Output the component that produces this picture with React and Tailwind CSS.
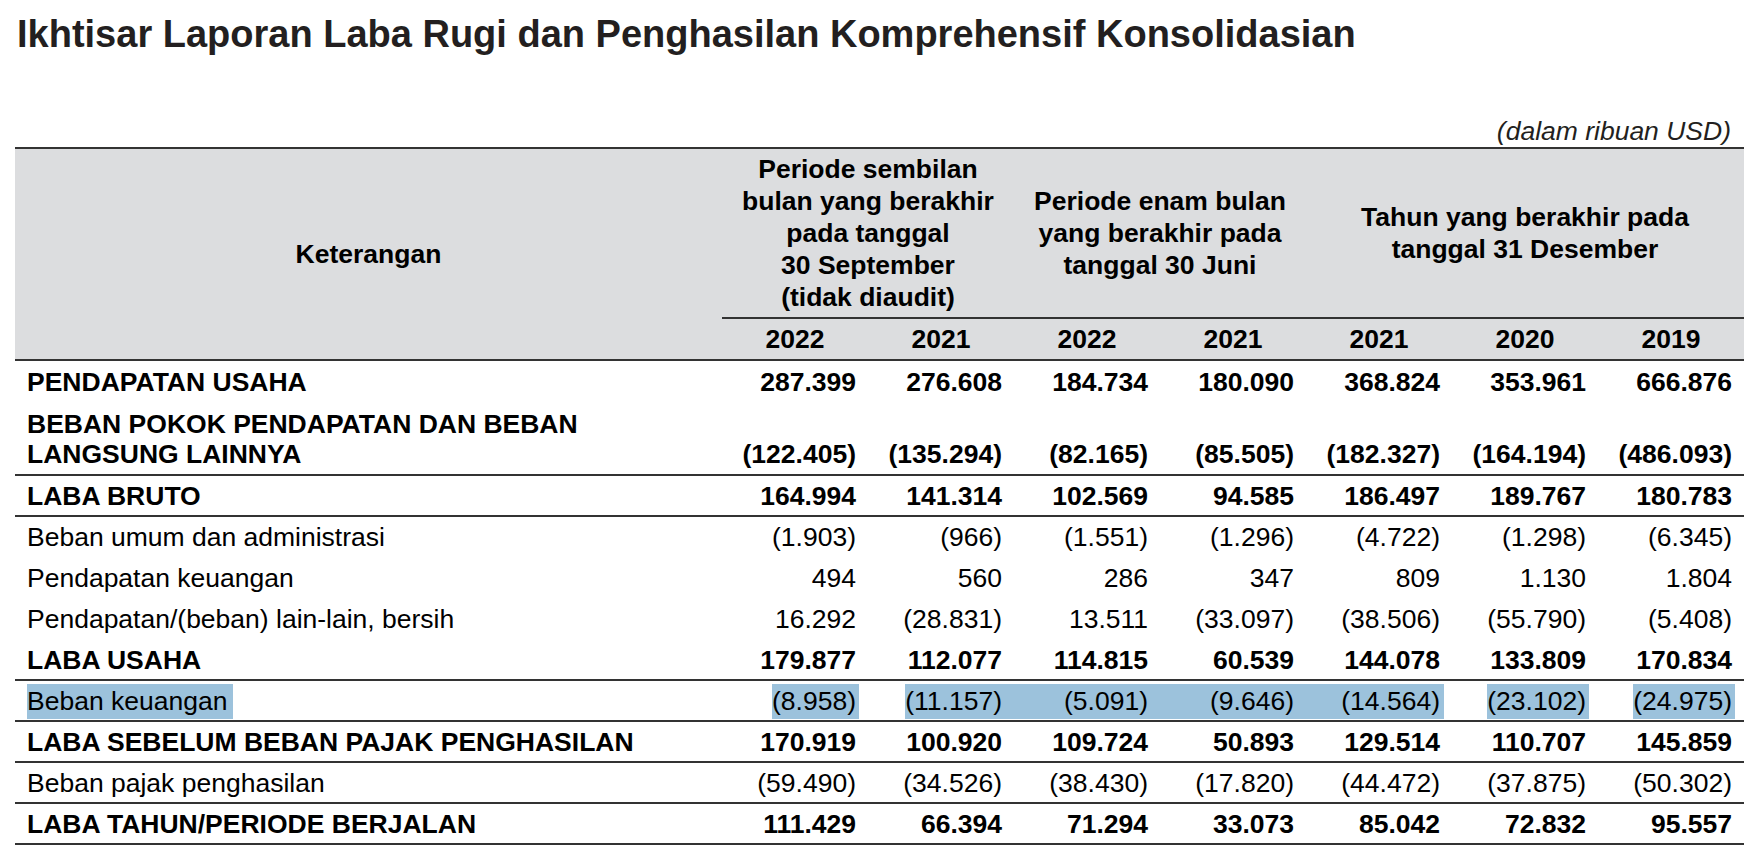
import React from "react";

const rows = [
  { label: ["PENDAPATAN USAHA"], bold: true, border: false, pad: "pt-[6px] pb-[7px]", v: ["287.399", "276.608", "184.734", "180.090", "368.824", "353.961", "666.876"] },
  { label: ["BEBAN POKOK PENDAPATAN DAN BEBAN", "LANGSUNG LAINNYA"], bold: true, border: true, pad: "pt-[5px] pb-[5px]", v: ["(122.405)", "(135.294)", "(82.165)", "(85.505)", "(182.327)", "(164.194)", "(486.093)"] },
  { label: ["LABA BRUTO"], bold: true, border: true, pad: "pt-[5px] pb-[4px]", v: ["164.994", "141.314", "102.569", "94.585", "186.497", "189.767", "180.783"] },
  { label: ["Beban umum dan administrasi"], bold: false, border: false, pad: "pt-[5px] pb-[6px]", v: ["(1.903)", "(966)", "(1.551)", "(1.296)", "(4.722)", "(1.298)", "(6.345)"] },
  { label: ["Pendapatan keuangan"], bold: false, border: false, pad: "pt-[5px] pb-[6px]", v: ["494", "560", "286", "347", "809", "1.130", "1.804"] },
  { label: ["Pendapatan/(beban) lain-lain, bersih"], bold: false, border: false, pad: "pt-[5px] pb-[6px]", v: ["16.292", "(28.831)", "13.511", "(33.097)", "(38.506)", "(55.790)", "(5.408)"] },
  { label: ["LABA USAHA"], bold: true, border: true, pad: "pt-[5px] pb-[4px]", v: ["179.877", "112.077", "114.815", "60.539", "144.078", "133.809", "170.834"] },
  { highlight: true },
  { label: ["LABA SEBELUM BEBAN PAJAK PENGHASILAN"], bold: true, border: true, pad: "pt-[5px] pb-[4px]", v: ["170.919", "100.920", "109.724", "50.893", "129.514", "110.707", "145.859"] },
  { label: ["Beban pajak penghasilan"], bold: false, border: true, pad: "pt-[5px] pb-[4px]", v: ["(59.490)", "(34.526)", "(38.430)", "(17.820)", "(44.472)", "(37.875)", "(50.302)"] },
  { label: ["LABA TAHUN/PERIODE BERJALAN"], bold: true, border: true, pad: "pt-[5px] pb-[4px]", v: ["111.429", "66.394", "71.294", "33.073", "85.042", "72.832", "95.557"] },
];

const cols = "grid grid-cols-[707px_repeat(7,146px)]";
const hl = "bg-[#9cc2dc]";

function HighlightRow() {
  return (
    <div className={`${cols} items-end pt-[3px] pb-[1px] border-b-2 border-[#333] leading-[35px]`}>
      <div className="pl-[12px]">
        <span className={`inline-block ${hl} pr-[6px]`}>Beban keuangan</span>
      </div>
      <div className="text-right pr-[9px]">
        <span className={`inline-block ${hl} pr-[3px]`}>(8.958)</span>
      </div>
      <div className="text-right pr-0">
        <span className={`inline-block ${hl} pr-[12px]`}>(11.157)</span>
      </div>
      <div className={`text-right pr-[12px] ${hl}`}>(5.091)</div>
      <div className={`text-right pr-[12px] ${hl}`}>(9.646)</div>
      <div className="pr-[8px]">
        <div className={`text-right pr-[4px] ${hl}`}>(14.564)</div>
      </div>
      <div className="text-right pr-[9px]">
        <span className={`inline-block ${hl} pr-[3px]`}>(23.102)</span>
      </div>
      <div className="text-right pr-[9px]">
        <span className={`inline-block ${hl} pr-[3px]`}>(24.975)</span>
      </div>
    </div>
  );
}

export default function App() {
  return (
    <div className="w-[1756px] h-[862px] bg-white text-black font-['Liberation_Sans',Arial,sans-serif] overflow-hidden">
      <h1 className="pl-[17px] pt-[12px] text-[38px] leading-[44px] font-bold text-[#231f20]">
        Ikhtisar Laporan Laba Rugi dan Penghasilan Komprehensif Konsolidasian
      </h1>
      <div className="ml-[15px] w-[1729px] mt-[60px] text-right pr-[13px] italic text-[26.5px] leading-[30px] text-[#231f20]">
        (dalam ribuan USD)
      </div>
      <div className="ml-[15px] w-[1729px] mt-[1px] text-[26.5px] leading-[30px]">
        <div className={`${cols} border-t-2 border-b-2 border-[#333] bg-[#dcdddf] font-bold`}>
          <div className="row-span-2 flex items-center justify-center">Keterangan</div>
          <div className="col-span-2 h-[168px] flex items-center justify-center text-center leading-[32px]">
            <div>
              Periode sembilan
              <br />
              bulan yang berakhir
              <br />
              pada tanggal
              <br />
              30 September
              <br />
              (tidak diaudit)
            </div>
          </div>
          <div className="col-span-2 h-[168px] flex items-center justify-center text-center leading-[32px]">
            <div>
              Periode enam bulan
              <br />
              yang berakhir pada
              <br />
              tanggal 30 Juni
            </div>
          </div>
          <div className="col-span-3 h-[168px] flex items-center justify-center text-center leading-[32px]">
            <div>
              Tahun yang berakhir pada
              <br />
              tanggal 31 Desember
            </div>
          </div>
          {["2022", "2021", "2022", "2021", "2021", "2020", "2019"].map((y, i) => (
            <div key={i} className="border-t-2 border-[#333] h-[42px] flex items-center justify-center">
              {y}
            </div>
          ))}
        </div>
        {rows.map((r, i) =>
          r.highlight ? (
            <HighlightRow key={i} />
          ) : (
            <div
              key={i}
              className={`${cols} items-end ${r.pad} ${r.border ? "border-b-2 border-[#333]" : ""} ${r.bold ? "font-bold" : ""}`}
            >
              <div className="pl-[12px]">
                {r.label.map((l, j) => (
                  <div key={j}>{l}</div>
                ))}
              </div>
              {r.v.map((n, j) => (
                <div key={j} className="text-right pr-[12px]">
                  {n}
                </div>
              ))}
            </div>
          )
        )}
      </div>
    </div>
  );
}
